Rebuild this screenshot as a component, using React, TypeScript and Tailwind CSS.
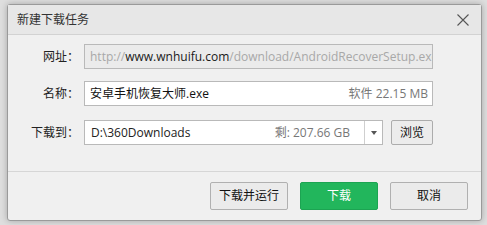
const FONT = "font-['Open_Sans','Noto_Sans_CJK_SC',sans-serif]"

function Label({ text }: { text: string }) {
  return <div className="w-[76px] shrink-0 pr-[5px] text-right text-[12px] text-[#222]">{text}</div>
}

export default function App() {
  return (
    <div className={`h-[225px] w-[487px] bg-[#dedede] pl-[7px] pt-[4px] ${FONT}`}>
      <div className="flex h-[217px] w-[475px] flex-col rounded-[3px] border border-[#9a9a9a] bg-[#f0f0f0] shadow-[0_0_6px_rgba(0,0,0,0.25)]">
        {/* title bar */}
        <div className="flex h-[30px] shrink-0 items-center border-b border-[#d2d2d2] bg-[#e7e7e7] pl-[9px] pr-[12px]">
          <span className="text-[12px] text-[#333]">新建下载任务</span>
          <svg className="ml-auto" width="12" height="12" viewBox="0 0 12 12" stroke="#555" strokeWidth="1.1">
            <path d="M0.5 0.5L11.5 11.5M11.5 0.5L0.5 11.5" />
          </svg>
        </div>

        {/* body */}
        <div className="flex h-[137px] shrink-0 flex-col border-b border-[#d6d6d6] pt-[9px]">
          <div className="flex items-center">
            <Label text="网址：" />
            <div className="flex h-[25px] w-[349px] items-center overflow-hidden whitespace-nowrap border border-[#b9b9b9] bg-[#ebebeb] pl-[5px] text-[12px] text-[#a8a8a8]">
              http://<span className="text-[#1a1a1a]">www.wnhuifu.com</span>/download/AndroidRecoverSetup.exe
            </div>
          </div>
          <div className="mt-[12px] flex items-center">
            <Label text="名称：" />
            <div className="flex h-[25px] w-[349px] items-center border border-[#b9b9b9] bg-white pl-[5px] pr-[4px] text-[12px]">
              <span className="text-[#111]">安卓手机恢复大师.exe</span>
              <span className="ml-auto text-[#777]">软件 22.15 MB</span>
            </div>
          </div>
          <div className="mt-[14px] flex items-center">
            <Label text="下载到：" />
            <div className="flex h-[25px] w-[299px] items-center border border-[#b9b9b9] bg-white text-[12px]">
              <span className="pl-[6px] text-[#222]">D:\360Downloads</span>
              <span className="ml-auto pr-[14px] text-[#777]">剩: 207.66 GB</span>
              <div className="flex h-full w-[18px] items-center justify-center border-l border-[#cfcfcf]">
                <svg width="6" height="4" viewBox="0 0 6 4"><path d="M0 0H6L3 4Z" fill="#555" /></svg>
              </div>
            </div>
            <button className="ml-[8px] flex h-[25px] w-[42px] items-center justify-center rounded-[2px] border border-[#acacac] bg-[#ececec] text-[12px] text-[#111]">
              浏览
            </button>
          </div>
        </div>

        {/* footer */}
        <div className="flex flex-1 items-center justify-end gap-[12px] pb-[1px] pr-[13px]">
          <button className="flex h-[28px] w-[78px] items-center justify-center rounded-[2px] border border-[#b0b0b0] bg-[#ebebeb] text-[12px] text-[#111]">
            下载并运行
          </button>
          <button className="flex h-[28px] w-[78px] items-center justify-center rounded-[2px] border border-[#1ca452] bg-[#22b65c] text-[12px] text-white">
            下载
          </button>
          <button className="flex h-[28px] w-[78px] items-center justify-center rounded-[2px] border border-[#b0b0b0] bg-[#ebebeb] text-[12px] text-[#111]">
            取消
          </button>
        </div>
      </div>
    </div>
  )
}
